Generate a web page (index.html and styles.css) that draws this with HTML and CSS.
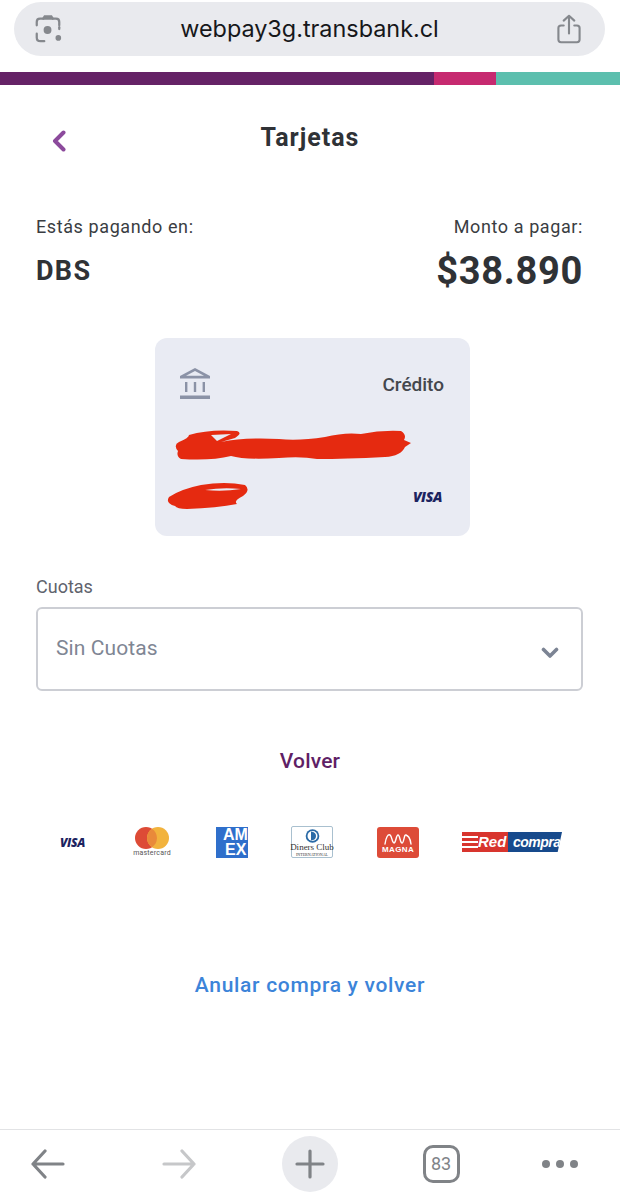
FILE: index.html
```html
<!DOCTYPE html>
<html lang="en">
<head>
  <meta charset="UTF-8">
  <title>Webpay</title>
  <link rel="stylesheet" href="styles.css">
</head>
<body>
<div class="page">
  <div class="url-wrap">
    <div class="url-bar">
      <svg class="url-icon" width="30" height="30" viewBox="0 0 32 32" fill="none" stroke="#85888d" stroke-width="2.4" stroke-linecap="round">
        <path d="M4 12V8.500Q4 5 7.500 5H24.500Q28 5 28 8.500V12"/>
        <path d="M11 5L12.500 2.500H19.500L21 5" fill="#85888d"/>
        <path d="M4 21V25Q4 29 8 29H12"/>
        <path d="M28 14V16"/>
        <circle cx="15.500" cy="17" r="4.200" fill="#85888d" stroke="none"/>
        <circle cx="27" cy="25.500" r="3" fill="#85888d" stroke="none"/>
      </svg>
      <span class="url-text">webpay3g.transbank.cl</span>
      <svg class="url-icon" width="26" height="30" viewBox="0 0 28 34" fill="none" stroke="#85888d" stroke-width="2.400" stroke-linecap="round" stroke-linejoin="round">
        <path d="M8 13H5Q2 13 2 16V29Q2 32 5 32H23Q26 32 26 29V16Q26 13 23 13H20"/>
        <path d="M14 22V2M8 7.500L14 2L20 7.500"/>
      </svg>
    </div>
  </div>

  <div class="stripe">
    <div class="stripe-purple"></div>
    <div class="stripe-pink"></div>
    <div class="stripe-teal"></div>
  </div>

  <div class="title-row">
    <svg class="back" width="14" height="22" viewBox="0 0 14 22" fill="none" stroke="#8c4a9c" stroke-width="4" stroke-linecap="round" stroke-linejoin="round">
      <path d="M11.500 2.500L3 11L11.500 19.500"/>
    </svg>
    <h1 class="title">Tarjetas</h1>
  </div>

  <div class="pay-row">
    <div>
      <p class="pay-label">Estás pagando en:</p>
      <p class="pay-shop">DBS</p>
    </div>
    <div class="pay-right">
      <p class="pay-label">Monto a pagar:</p>
      <p class="pay-amount">$38.890</p>
    </div>
  </div>

  <div class="card">
    <div class="card-top">
      <svg width="30" height="31" viewBox="0 0 30 31" fill="#8b92a6">
        <path d="M15 0L30 8V10.500H0V8ZM15 3L6 7.800H24Z" fill-rule="evenodd"/>
        <rect x="5" y="14" width="2.400" height="10"/>
        <rect x="13.800" y="14" width="2.400" height="10"/>
        <rect x="22.600" y="14" width="2.400" height="10"/>
        <rect x="0" y="27.500" width="30" height="3.500"/>
      </svg>
      <span class="card-type">Crédito</span>
    </div>
    <svg class="scribble-one" width="240" height="32" viewBox="0 0 240 32" fill="#e52a10" fill-rule="evenodd">
      <path d="M14 5Q34 -1 62 1Q68 3 60 8L46 12Q70 7 104 9Q124 11 150 7Q170 2 186 4Q206 0 226 1Q232 5 229 10L236 13L230 17Q226 26 210 27Q170 29 142 29Q126 26 104 28Q70 30 56 26Q36 31 6 29Q1 26 3 21Q-2 15 4 12Q14 8 14 5ZM36 5L56 4L42 11Z"/>
    </svg>
    <div class="card-bottom">
      <svg class="scribble-two" width="82" height="28" viewBox="0 0 82 28" fill="#e52a10" fill-rule="evenodd">
        <path d="M2 15Q14 7 34 3Q58 -1 78 3Q84 8 76 14Q66 19 70 22Q50 26 20 27Q10 27 8 24Q-2 21 2 15ZM38 8Q56 5 74 7Q56 10 38 8Z"/>
      </svg>
      <span class="visa visa-card">VISA</span>
    </div>
  </div>

  <div class="field">
    <label class="field-label">Cuotas</label>
    <div class="select">
      <span class="select-value">Sin Cuotas</span>
      <svg class="select-arrow" width="18" height="12" viewBox="0 0 18 12" fill="none" stroke="#7c8494" stroke-width="3.600" stroke-linecap="round" stroke-linejoin="round">
        <path d="M2.500 2.500L9 9L15.500 2.500"/>
      </svg>
    </div>
  </div>

  <a class="link-back">Volver</a>

  <div class="logos">
    <span class="visa visa-small">VISA</span>

    <div class="mc">
      <svg width="34" height="22" viewBox="0 0 34 22">
        <circle cx="11" cy="11" r="11" fill="#dd4b36"/>
        <circle cx="23" cy="11" r="11" fill="#f2b33d"/>
        <path d="M17 1.800A11 11 0 0 1 17 20.200A11 11 0 0 1 17 1.800Z" fill="#e98a3a"/>
      </svg>
      <span class="mc-text">mastercard</span>
    </div>

    <div class="amex"><span>AM</span><span class="amex-ex">EX</span></div>

    <div class="diners">
      <svg width="15" height="14" viewBox="0 0 15 14">
        <circle cx="7.500" cy="7" r="6.800" fill="#2a6aa6"/>
        <circle cx="7.500" cy="7" r="5" fill="#fff"/>
        <path d="M6 2.500V11.500Q11 11 11 7Q11 3 6 2.500Z" fill="#2a6aa6"/>
      </svg>
      <span class="diners-name">Diners Club</span>
      <span class="diners-sub">INTERNATIONAL</span>
    </div>

    <div class="magna">
      <svg width="28" height="13" viewBox="0 0 28 13" fill="none" stroke="#fff" stroke-width="1.400" stroke-linecap="round">
        <path d="M1 11C2 4 4 1 6 2S8 10 10 10S12 2 14 2S16 10 18 10S20 1 22 2S26 4 27 11"/>
      </svg>
      <span>MAGNA</span>
    </div>

    <div class="red">
      <div class="red-left">
        <div class="red-lines"><i></i><i></i><i></i></div>
        <span>Red</span>
      </div>
      <div class="red-right"><span>compra</span></div>
    </div>
  </div>

  <a class="link-cancel">Anular compra y volver</a>

  <div class="toolbar">
    <div class="tool">
      <svg width="36" height="30" viewBox="0 0 36 30" fill="none" stroke="#808387" stroke-width="3.200" stroke-linecap="round" stroke-linejoin="round">
        <path d="M33 15H3M15 2L3 15L15 28"/>
      </svg>
    </div>
    <div class="tool">
      <svg width="36" height="30" viewBox="0 0 36 30" fill="none" stroke="#c6c7c9" stroke-width="3.200" stroke-linecap="round" stroke-linejoin="round">
        <path d="M3 15H33M21 2L33 15L21 28"/>
      </svg>
    </div>
    <div class="tool tool-plus">
      <svg width="30" height="30" viewBox="0 0 30 30" fill="none" stroke="#808387" stroke-width="3.200" stroke-linecap="round">
        <path d="M15 2V28M2 15H28"/>
      </svg>
    </div>
    <div class="tool">
      <span class="tab-count">83</span>
    </div>
    <div class="tool tool-more">
      <i></i><i></i><i></i>
    </div>
  </div>
</div>
</body>
</html>
```

FILE: styles.css
```css
* {
  box-sizing: border-box;
}
body {
  margin: 0;
  background: #fff;
  font-family: Roboto, "Liberation Sans", sans-serif;
}
p, h1 {
  margin: 0;
}

.page {
  display: flex;
  flex-direction: column;
  height: 1200px;
  overflow: hidden;
}

/* browser address bar */
.url-wrap {
  padding: 2px 15px 0 14px;
}
.url-bar {
  display: flex;
  align-items: center;
  justify-content: space-between;
  height: 54px;
  padding: 0 23px 0 19px;
  background: #e9eaee;
  border-radius: 27px;
}
.url-text {
  margin-bottom: 2px;
  font-family: Inter, Roboto, sans-serif;
  font-size: 23.400px;
  color: #16171a;
}

.stripe {
  display: flex;
  height: 13px;
  margin-top: 16px;
}
.stripe-purple {
  width: 434px;
  background: #652266;
}
.stripe-pink {
  width: 62px;
  background: #c62a70;
}
.stripe-teal {
  flex: 1;
  background: #5cbfae;
}

.title-row {
  position: relative;
  height: 104px;
  padding-top: 37px;
}
.title {
  font-size: 25px;
  font-weight: 700;
  letter-spacing: 1px;
  line-height: 32px;
  text-align: center;
  color: #2f3236;
}
.back {
  position: absolute;
  left: 52px;
  top: 45px;
}

.pay-row {
  display: flex;
  justify-content: space-between;
  padding: 0 37px 0 36px;
  height: 123px;
  margin-top: 26px;
}
.pay-right {
  text-align: right;
}
.pay-label {
  font-size: 18px;
  line-height: 24px;
  letter-spacing: .6px;
  color: #3a3d42;
}
.pay-shop {
  margin-top: 14px;
  font-size: 27px;
  font-weight: 700;
  line-height: 36px;
  letter-spacing: 1.300px;
  color: #2f3236;
}
.pay-amount {
  margin-top: 9px;
  font-size: 38px;
  font-weight: 700;
  line-height: 46px;
  letter-spacing: .7px;
  color: #2f3236;
}

.card {
  width: 315px;
  height: 198px;
  margin-left: 155px;
  padding: 30px 26px 0 12px;
  background: #e9ebf3;
  border-radius: 12px;
}
.card-top {
  display: flex;
  align-items: center;
  justify-content: space-between;
  padding-left: 13px;
}
.card-type {
  margin-top: 2px;
  font-size: 19px;
  font-weight: 500;
  color: #44474d;
}
.scribble-one {
  display: block;
  margin: 31px 0 0 8px;
}
.card-bottom {
  display: flex;
  align-items: center;
  justify-content: space-between;
  margin-top: 20px;
}
.visa {
  font-family: "Open Sans", "Liberation Sans", sans-serif;
  font-style: italic;
  font-weight: 800;
  color: #1c2360;
}
.visa-card {
  font-size: 14px;
  letter-spacing: -.4px;
  margin: 0 2px 0 0;
}
.scribble-two {
  display: block;
}

.field {
  padding: 0 37px 0 36px;
  margin-top: 39px;
}
.field-label {
  display: block;
  font-size: 18px;
  line-height: 24px;
  color: #5f636d;
}
.select {
  display: flex;
  align-items: center;
  justify-content: space-between;
  height: 84px;
  margin-top: 8px;
  padding: 0 22px 0 18px;
  border: 2px solid #ccced4;
  border-radius: 6px;
  font-size: 21px;
  color: #7f8694;
}
.select-value {
  margin-bottom: 3px;
  letter-spacing: .1px;
}
.select-arrow {
  margin-top: 7px;
}

.link-back {
  margin-top: 57px;
  font-size: 21px;
  font-weight: 500;
  line-height: 26px;
  letter-spacing: .2px;
  text-align: center;
  color: #5f1f66;
}

/* card brands */
.logos {
  display: flex;
  align-items: center;
  gap: 43px;
  height: 34px;
  margin-top: 51px;
  padding-left: 60px;
}
.visa-small {
  width: 26px;
  font-size: 12px;
  letter-spacing: -.3px;
}
.mc {
  display: flex;
  flex-direction: column;
  align-items: center;
  width: 34px;
  margin-left: 6px;
}
.mc-text {
  font-size: 7px;
  line-height: 8px;
  letter-spacing: .2px;
  color: #555;
}
.amex {
  display: flex;
  flex-direction: column;
  justify-content: center;
  width: 32px;
  height: 31px;
  margin-left: 4px;
  padding-left: 7px;
  overflow: hidden;
  background: #2f6fcb;
  font-family: "Liberation Sans", sans-serif;
  font-size: 16px;
  font-weight: 700;
  line-height: 15px;
  white-space: nowrap;
  color: #fff;
}
.amex-ex {
  padding-left: 2px;
}
.diners {
  display: flex;
  flex-direction: column;
  align-items: center;
  width: 42px;
  height: 32px;
  padding-top: 2px;
  border: 1px solid #a9c0cf;
  border-radius: 2px;
  white-space: nowrap;
}
.diners-name {
  font-family: "Liberation Serif", serif;
  font-size: 9px;
  line-height: 9px;
  color: #333;
}
.diners-sub {
  font-family: "Liberation Serif", serif;
  font-size: 4px;
  line-height: 5px;
  color: #333;
}
.magna {
  display: flex;
  flex-direction: column;
  align-items: center;
  width: 42px;
  height: 31px;
  margin-left: 1px;
  padding-top: 6px;
  background: #dd4b38;
  border-radius: 3px;
  font-family: "Liberation Sans", sans-serif;
  font-size: 8px;
  font-weight: 700;
  letter-spacing: .4px;
  line-height: 8px;
  color: #fff;
}
.red {
  display: flex;
  width: 100px;
  height: 20px;
  font-family: "Liberation Sans", sans-serif;
  font-style: italic;
  font-weight: 700;
  line-height: 20px;
  color: #fff;
}
.red-left {
  display: flex;
  width: 46px;
  background: #d8352e;
  font-size: 15px;
}
.red-lines {
  display: flex;
  flex-direction: column;
  justify-content: center;
  gap: 3px;
  width: 16px;
  flex-shrink: 0;
}
.red-lines i {
  display: block;
  height: 2px;
  background: #fff;
}
.red-right {
  flex: 1;
  padding-left: 5px;
  background: #174a8c;
  clip-path: polygon(0 0, 100% 0, 92% 100%, 0 100%);
  font-size: 14px;
  letter-spacing: -.5px;
}

.link-cancel {
  margin-top: 113px;
  font-size: 21px;
  font-weight: 500;
  line-height: 26px;
  letter-spacing: .7px;
  text-align: center;
  color: #3c84d9;
}

/* browser bottom toolbar */
.toolbar {
  display: flex;
  align-items: center;
  gap: 75px;
  height: 71px;
  margin-top: auto;
  padding: 0 0 3px 20px;
  border-top: 1px solid #e2e3e5;
}
.tool {
  display: flex;
  align-items: center;
  justify-content: center;
  flex-shrink: 0;
  width: 56px;
  height: 56px;
}
.tool-plus {
  background: #e9eaee;
  border-radius: 50%;
}
.tab-count {
  display: flex;
  align-items: center;
  justify-content: center;
  width: 37px;
  height: 38px;
  border: 3px solid #808387;
  border-radius: 10px;
  font-size: 18px;
  color: #808387;
}
.tool-more {
  gap: 6px;
  margin-left: -12px;
}
.tool-more i {
  width: 8px;
  height: 8px;
  background: #808387;
  border-radius: 50%;
}
```
